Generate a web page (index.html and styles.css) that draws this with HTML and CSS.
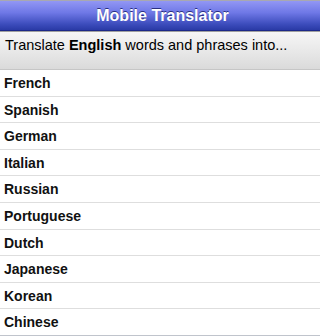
FILE: index.html
```html
<!DOCTYPE html>
<html>
<head>
<meta charset="utf-8">
<link rel="stylesheet" href="styles.css">
</head>
<body>
<div class="header"><span class="title">Mobile Translator</span></div>
<div class="intro">Translate <b>English</b> words and phrases into...</div>
<ul class="langs">
<li>French</li>
<li>Spanish</li>
<li>German</li>
<li>Italian</li>
<li>Russian</li>
<li>Portuguese</li>
<li>Dutch</li>
<li>Japanese</li>
<li>Korean</li>
<li>Chinese</li>
</ul>
</body>
</html>
```
FILE: styles.css
```css
html {
  overflow: hidden;
}
html, body {
  margin: 0;
  padding: 0;
  background: #ffffff;
  font-family: "Liberation Sans", Arial, sans-serif;
  color: #000;
}
.header {
  height: 29px;
  border-top: 1px solid #a8a8b0;
  border-bottom: 1px solid #1c2888;
  background: linear-gradient(to bottom, #9297f4 0%, #6f78e6 40%, #3c4cbc 80%, #2a3aa6 100%);
}
.title {
  display: block;
  width: 325px;
  color: #fff;
  font-weight: bold;
  font-size: 16px;
  line-height: 29px;
  text-align: center;
  text-shadow: 0 -1px 0 #2a2f80;
}
.intro {
  box-sizing: border-box;
  height: 39px;
  border-top: 1px solid #a0a0a0;
  border-bottom: 1px solid #c6c6c6;
  background: linear-gradient(to bottom, #f6f6f6 0%, #e6e6e6 60%, #dadada 100%);
  font-size: 14.5px;
  line-height: 16px;
  padding: 5px 5px 0;
  white-space: nowrap;
}
.langs {
  list-style: none;
  margin: 0;
  padding: 0;
}
.langs li {
  box-sizing: border-box;
  height: 26.6px;
  padding: 2px 0 0 4px;
  line-height: 23.6px;
  border-bottom: 1px solid #dedede;
  font-size: 14px;
  font-weight: bold;
  color: #111;
}
.langs li:last-child {
  border-bottom-color: #c0c4cc;
}
```
